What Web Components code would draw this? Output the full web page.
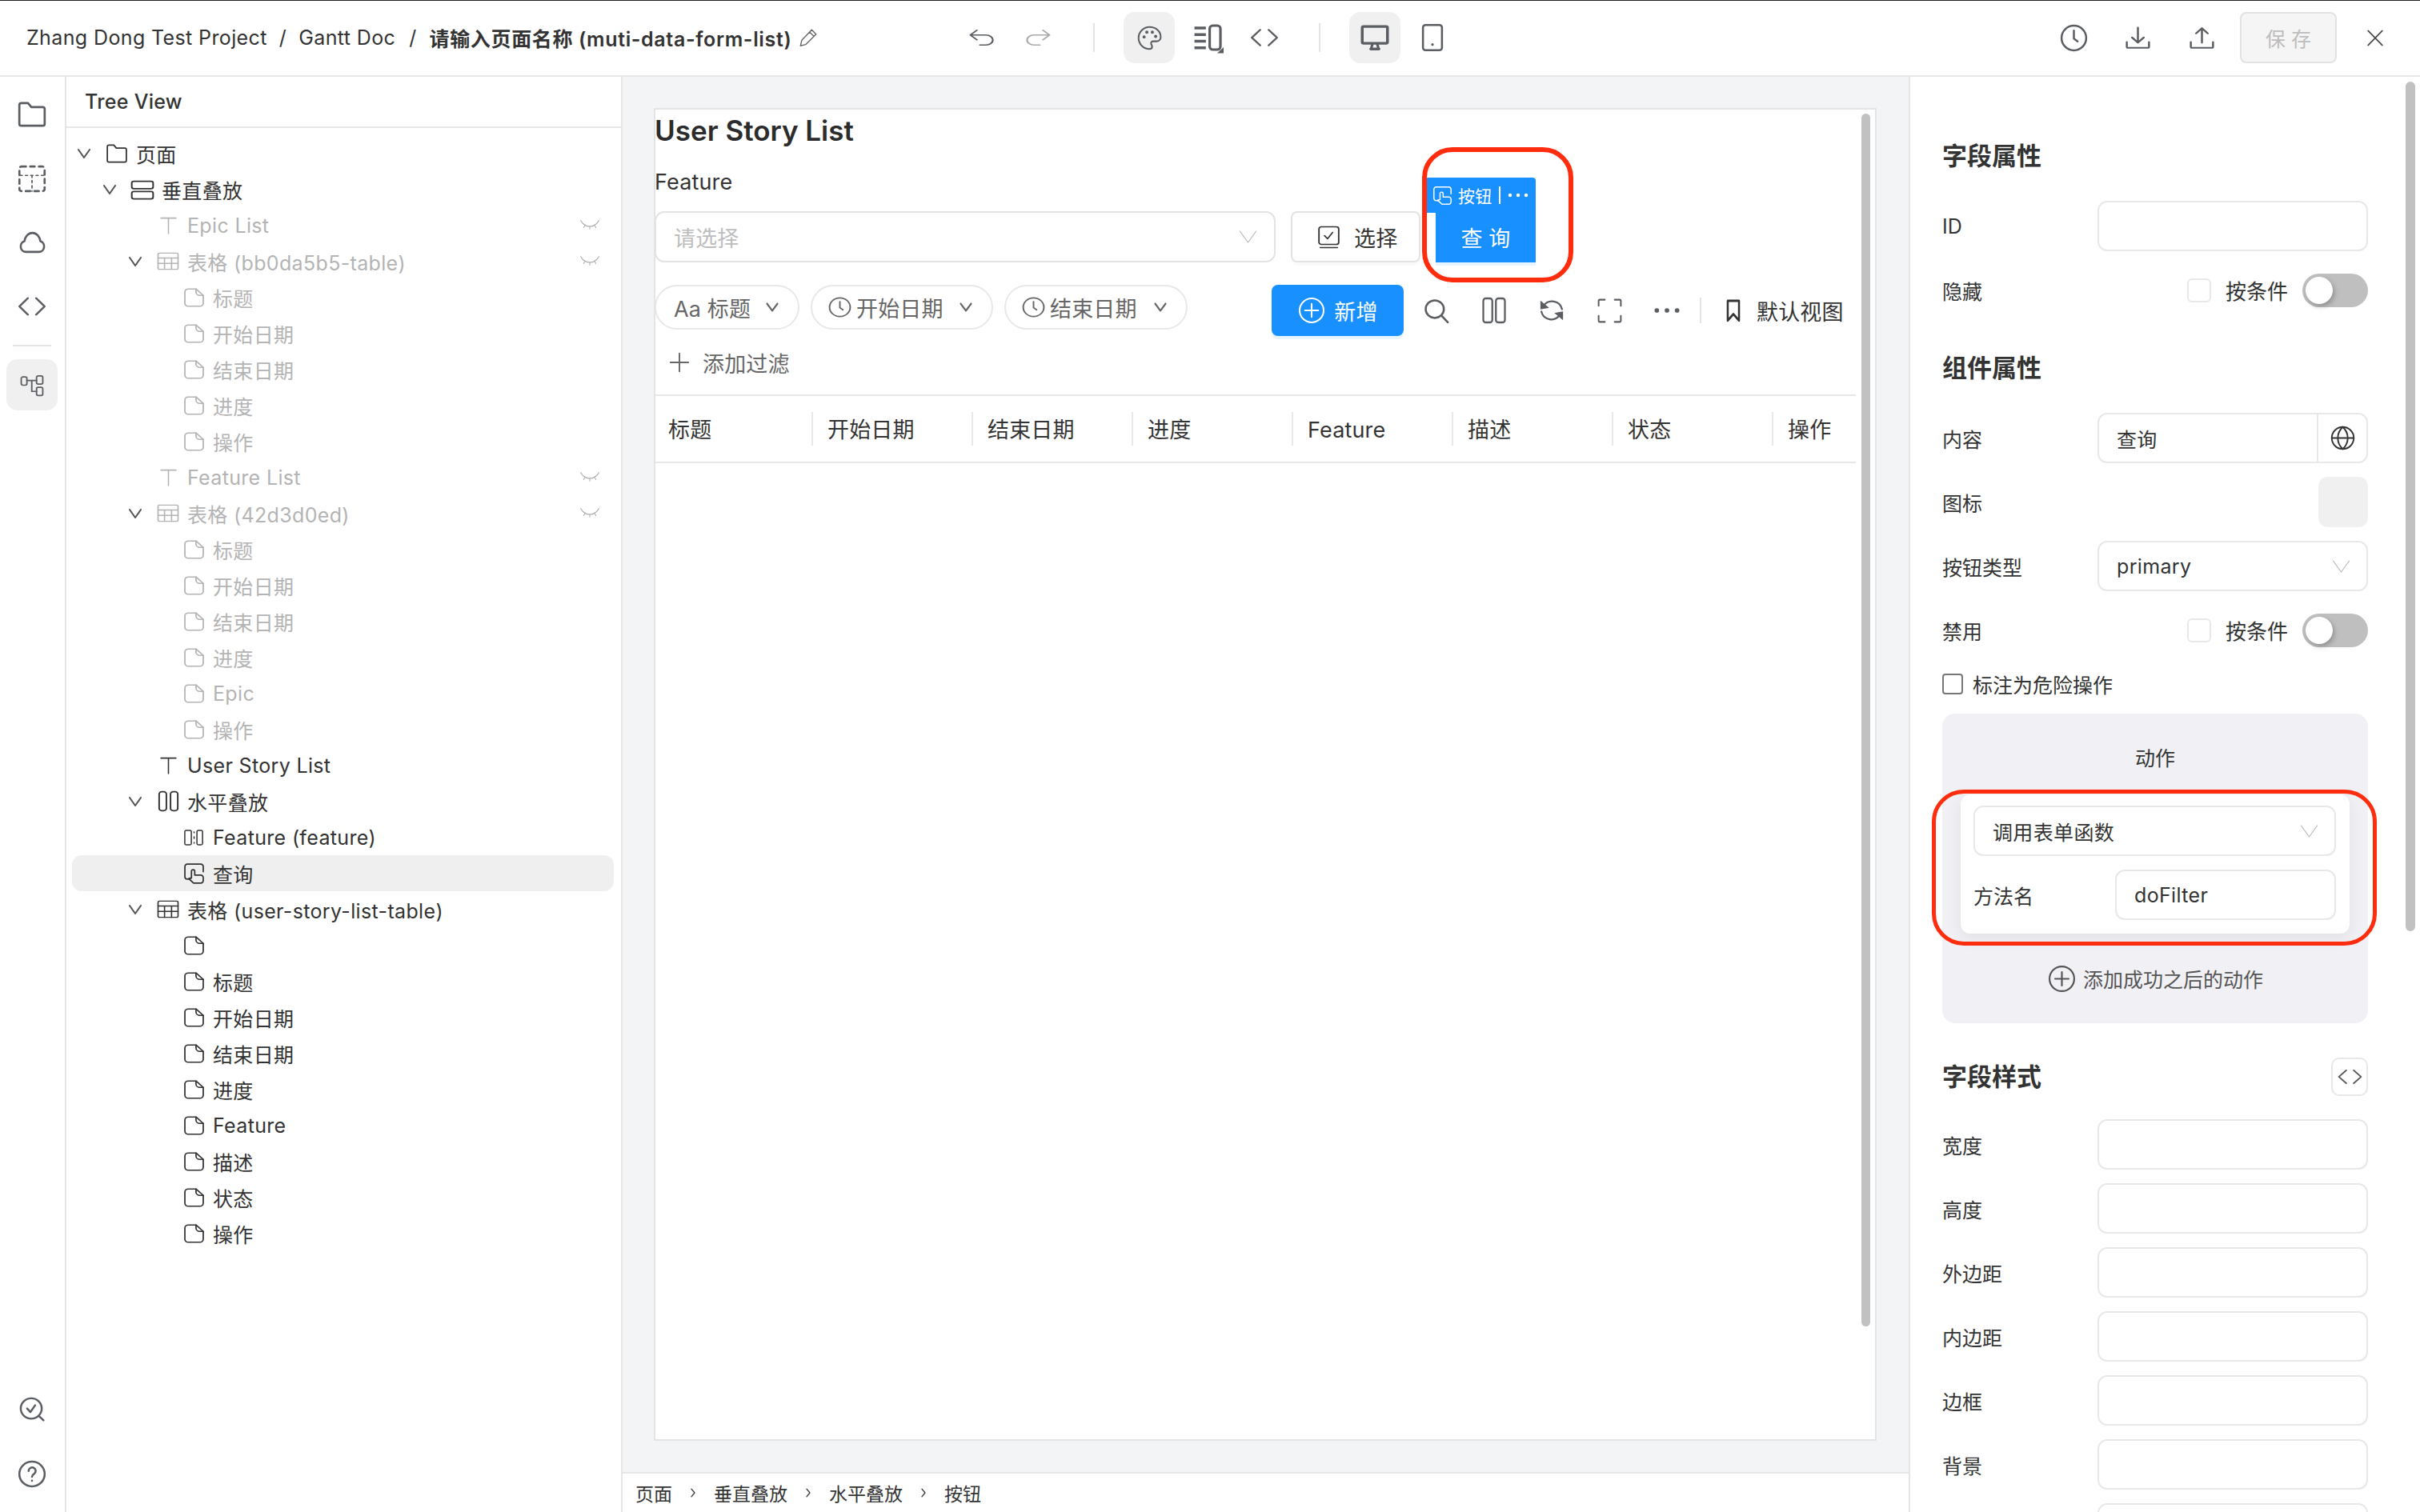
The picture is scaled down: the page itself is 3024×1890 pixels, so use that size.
<!DOCTYPE html>
<html lang="zh"><head><meta charset="utf-8"><title>Form editor</title>
<style>
html,body{margin:0;padding:0;background:#fff;}
body{width:3024px;height:1890px;overflow:hidden;font-family:Inter,"Noto Sans CJK SC",sans-serif;font-size:25px;color:#333;}
</style></head><body>
<app-shell></app-shell>
<script>
const P={
folder:'<path d="M2.5 5A1.5 1.5 0 0 1 4 3.5h5l2.5 3H20A1.5 1.5 0 0 1 21.500 8v11a1.500 1.500 0 0 1-1.500 1.500H4A1.500 1.500 0 0 1 2.500 19z"/>',
dashed:'<rect x="3" y="3" width="18" height="18" rx="1.500" stroke-dasharray="3.200 3"/><path d="M3.500 9.500h17M12 9.500V21" stroke-dasharray="1.500 2.300" stroke-width="1"/>',
cloud:'<path d="M6.800 19.500a4.300 4.300 0 0 1-1.300-8.400C6 7.400 8.700 4.500 12 4.500s6 2.900 6.500 6.600a4.300 4.300 0 0 1-1.300 8.400z"/>',
code:'<path d="M9 5.500 3 12l6 6.500M15 5.500l6 6.500-6 6.500"/>',
tree:'<rect x="2.500" y="4" width="5" height="8" rx="1.500"/><rect x="16" y="3" width="5.500" height="8" rx="1.500"/><rect x="16" y="14" width="5.500" height="8" rx="1.500"/><path d="M7.500 7.500H16M11.800 7.500V18H16"/>',
checksearch:'<circle cx="11" cy="11" r="9"/><path d="M7.500 11l2.800 3.200 4-6"/><path d="M17.500 17.500l4 4"/>',
help:'<circle cx="12" cy="12" r="10"/><path d="M9.300 9.500a2.800 2.800 0 1 1 4.300 2.400c-1 .6-1.600 1.200-1.600 2.300"/><path d="M12 17.300v.2"/>',
undo:'<path d="M8.500 3.500 3 9l5.500 5.500M3 9h13a4.800 4.800 0 0 1 0 11.500h-5"/>',
redo:'<path d="M15.500 3.500 21 9l-5.500 5.500M21 9H8a4.800 4.800 0 0 0 0 11.500h5"/>',
palette:'<path d="M12 2C6.500 2 2 6.500 2 12s4.500 10 10 10c1.500 0 2.300-1 2.300-2.200 0-1.300-1-1.800-1-3 0-1.100.9-1.800 2-1.800h2.800c2.400 0 4-1.700 4-4C22.100 5.700 17.500 2 12 2z"/><circle cx="7" cy="11" r=".7"/><circle cx="9.500" cy="6.800" r=".7"/><circle cx="14.500" cy="6.800" r=".7"/><circle cx="17.500" cy="10.500" r=".7"/>',
outline:'<path d="M1 4h9M1 9.500h9M1 15h9M1 20.500h9" stroke-width="2.400" stroke-linecap="butt"/><rect x="13" y="2" width="8.500" height="20" rx="2.500" stroke-width="2"/><path d="M24 20v5h-5z" fill="currentColor" stroke="none"/>',
monitor:'<rect x="3" y="3.200" width="18" height="13.300" rx="1" stroke-width="2"/><path d="M10.300 17l-1 4h5.400l-1-4" stroke-width="1.800"/><path d="M9 21h6" stroke-width="1.800"/>',
phone:'<rect x="4.500" y="1.500" width="15" height="21" rx="2" stroke-width="1.600"/><path d="M12 17.600v.2" stroke-width="2"/>',
clock:'<circle cx="12" cy="12" r="10"/><path d="M12 6v6.500l3 2.300"/>',
download:'<path d="M12 2v14M7 11.500 12 16.500l5-5M2.500 16v4.500a1 1 0 0 0 1 1h17a1 1 0 0 0 1-1V16"/>',
upload:'<path d="M12 16.500V2.500M7 7.500l5-5 5 5M2.500 16v4.500a1 1 0 0 0 1 1h17a1 1 0 0 0 1-1V16"/>',
close:'<path d="M5 4l14 16M19 4 5 20"/>',
pencil:'<path d="M16 3l5 5L9 20l-6 1.500L4.500 15zM13.500 5.500l5 5"/>',
search:'<circle cx="10.500" cy="10.500" r="8"/><path d="M16.500 16.500 22 22.500"/>',
columns:'<rect x="3" y="2.500" width="7.500" height="19" rx="2"/><rect x="13.500" y="2.500" width="7.500" height="19" rx="2"/>',
refresh:'<path d="M5.200 8.200A8.600 8.600 0 0 1 20.600 11"/><path d="M18.800 15.800A8.600 8.600 0 0 1 3.400 13"/><path d="M2.600 3.800v7.400l7.200-1.400z" fill="currentColor" stroke="none"/><path d="M21.400 20.200v-7.400l-7.200 1.400z" fill="currentColor" stroke="none"/>',
fullscreen:'<path d="M8 3H4a1 1 0 0 0-1 1v4M16 3h4a1 1 0 0 1 1 1v4M8 21H4a1 1 0 0 1-1-1v-4M16 21h4a1 1 0 0 0 1-1v-4"/>',
more:'<circle cx="4" cy="12" r="1.800" fill="currentColor" stroke="none"/><circle cx="12" cy="12" r="1.800" fill="currentColor" stroke="none"/><circle cx="20" cy="12" r="1.800" fill="currentColor" stroke="none"/>',
bookmark:'<path d="M5.500 3h13v18.500L12 15.500l-6.500 6z"/>',
plus:'<path d="M12 3v18M3 12h18"/>',
pluscircle:'<circle cx="12" cy="12" r="10"/><path d="M12 6.500v11M6.500 12h11"/>',
globe:'<circle cx="12" cy="12" r="10"/><path d="M2 12h20M12 2c-6 5.500-6 14.500 0 20M12 2c6 5.500 6 14.500 0 20"/>',
chev:'<path d="M5.500 8.500 12 15.500l6.500-7"/>',
vee:'<path d="M3 6l9 12 9-12"/>',
arrow:'<path d="M8 4l8 8-8 8"/>',
t:'<path d="M3 3.500h18M12 3.500V22"/>',
vstack:'<rect x="2" y="3" width="20" height="8" rx="2"/><rect x="2" y="14" width="20" height="8" rx="2"/>',
hstack:'<rect x="3" y="1.500" width="7" height="21" rx="2.500"/><rect x="14" y="1.500" width="7" height="21" rx="2.500"/>',
table:'<rect x="2" y="3" width="20" height="18" rx="1.500"/><path d="M2 8.500h20M2 14.500h20M8.500 8.500V21M15.500 8.500V21"/>',
field:'<rect x="2.500" y="3" width="7" height="18" rx="1.500"/><rect x="15.500" y="3" width="6" height="18" rx="1.500"/><path d="M12.500 5v1M12.500 11v2M12.500 18v1"/>',
hand:'<path d="M7.500 17.500H5A2.500 2.500 0 0 1 2.500 15V5A2.500 2.500 0 0 1 5 2.500h14A2.500 2.500 0 0 1 21.500 5v5"/><path d="M11.500 21.500 6.500 17l2.800-.6V9.800a1.700 1.700 0 0 1 3.400 0v3.700h6.300a2.500 2.500 0 0 1 2.500 2.500v3a2.500 2.500 0 0 1-2.500 2.500z"/>',
file:'<path d="M14 2H6A3.500 3.500 0 0 0 2.500 5.500v13A3.500 3.500 0 0 0 6 22h12a3.500 3.500 0 0 0 3.500-3.500V9.500z"/><path d="M14 2v3.500a4 4 0 0 0 4 4h3.500"/>',
eye:'<path d="M2 8c5 7 15 7 20 0M12 12.800V16M6.500 11.500 5 14.500M17.500 11.500l1.500 3M2 8l-.5-1M22 8l.5-1"/>',
checkbtn:'<rect x="4" y="2" width="16" height="17" rx="2"/><path d="M8.500 10.500l2.500 3 4-6M5 22h14"/>'
};
class UI extends HTMLElement{
  constructor(){super();this.attachShadow({mode:'open'});}
  a(n,d=''){const v=this.getAttribute(n);return v===null?d:v;}
  connectedCallback(){this.shadowRoot.innerHTML=this.render();}
}
class UiIcon extends UI{render(){
  const w=this.a('w','24'),h=this.a('h',w),sw=this.a('sw','2');
  return `<style>:host{display:inline-flex;flex:none;width:${w}px;height:${h}px;line-height:0}svg{display:block;overflow:visible}</style>
  <svg width="${w}" height="${h}" viewBox="0 0 24 24" preserveAspectRatio="none" fill="none" stroke="currentColor" stroke-width="${sw}" stroke-linecap="round" stroke-linejoin="round">${P[this.a('n')]}</svg>`;
}}
class ToolBtn extends UI{render(){
  const act=this.hasAttribute('active');
  return `<style>:host{display:flex;flex:none;width:64px;height:64px;align-items:center;justify-content:center;border-radius:14px;color:${this.a('c','#5a5d62')};background:${act?'#f0f0f0':'transparent'};margin-left:${this.a('ml','0')}px}</style><slot></slot>`;
}}
class VDiv extends UI{render(){
  return `<style>:host{display:block;flex:none;width:2px;height:${this.a('h','36')}px;background:#e4e4e4;margin:0 ${this.a('mr','36')}px 0 ${this.a('ml','36')}px}</style>`;
}}
class TopBar extends UI{render(){
  return `<style>:host{display:flex;align-items:center;height:94px;border-bottom:2px solid #e6e6e6;box-shadow:inset 0 1px 0 #222;padding-right:24px;background:#fff}
  .crumb{flex:0 0 1161px;padding-left:33px;display:flex;align-items:center;font-size:25px;white-space:nowrap;color:#333;letter-spacing:.38px}
  .s{margin:0 15px;color:#333}.s2{margin-left:17px;margin-right:16px}b{font-weight:600;letter-spacing:.65px}.pen{margin-left:8px;color:#666}
  .save{flex:none;box-sizing:border-box;width:121px;height:64px;margin-left:16px;margin-right:16px;border:2px solid #e2e2e2;border-radius:8px;background:#f5f5f5;color:#bdbdbd;display:flex;align-items:center;justify-content:center;font-size:25px;white-space:pre}
  .sp{flex:1}</style>
  <div class="crumb"><span>Zhang Dong Test Project</span><span class="s">/</span><span>Gantt Doc</span><span class="s s2">/</span><b>请输入页面名称 (muti-data-form-list)</b><ui-icon class="pen" n="pencil" w="26" sw="1.300"></ui-icon></div>
  <tool-btn><ui-icon n="undo" w="36" h="26" sw="1.500"></ui-icon></tool-btn>
  <tool-btn ml="8" c="#aaa"><ui-icon n="redo" w="36" h="26" sw="1.500"></ui-icon></tool-btn>
  <v-div></v-div>
  <tool-btn active><ui-icon n="palette" w="33" h="33" sw="1.500"></ui-icon></tool-btn>
  <tool-btn ml="10"><ui-icon n="outline" w="38" h="36" sw="1.800"></ui-icon></tool-btn>
  <tool-btn ml="6"><ui-icon n="code" w="42" h="36" sw="1.400"></ui-icon></tool-btn>
  <v-div></v-div>
  <tool-btn active><ui-icon n="monitor" w="42" h="38" sw="2"></ui-icon></tool-btn>
  <tool-btn ml="8"><ui-icon n="phone" w="38" h="36"></ui-icon></tool-btn>
  <span class="sp"></span>
  <tool-btn><ui-icon n="clock" w="37" sw="1.600"></ui-icon></tool-btn>
  <tool-btn ml="16"><ui-icon n="download" w="35" h="31" sw="1.700"></ui-icon></tool-btn>
  <tool-btn ml="16"><ui-icon n="upload" w="35" h="31" sw="1.700"></ui-icon></tool-btn>
  <div class="save">保 存</div>
  <tool-btn c="#444"><ui-icon n="close" w="30" h="27" sw="1.500"></ui-icon></tool-btn>`;
}}
class IconRail extends UI{render(){
  return `<style>:host{display:flex;flex-direction:column;box-sizing:border-box;height:100%;border-right:2px solid #e6e6e6;padding:15px 9px 16px 8px;gap:16px;background:#fff;color:#555}
  hr{border:0;height:2px;background:#e4e4e4;margin:0 0 0 8px;width:48px;flex:none}.sp{flex:1}</style>
  <tool-btn><ui-icon n="folder" w="40" h="40" sw="1.600"></ui-icon></tool-btn>
  <tool-btn><ui-icon n="dashed" w="42" h="41" sw="1.500"></ui-icon></tool-btn>
  <tool-btn><ui-icon n="cloud" w="37" h="38" sw="1.700"></ui-icon></tool-btn>
  <tool-btn><ui-icon n="code" w="42" h="38" sw="1.500"></ui-icon></tool-btn>
  <hr>
  <tool-btn active><ui-icon n="tree" w="34" h="31" sw="1.300"></ui-icon></tool-btn>
  <span class="sp"></span>
  <tool-btn><ui-icon n="checksearch" w="35" h="34" sw="1.700"></ui-icon></tool-btn>
  <tool-btn><ui-icon n="help" w="38" h="37" sw="1.600"></ui-icon></tool-btn>`;
}}
class TreeRow extends UI{render(){
  const l=+this.a('l','0'),dim=this.hasAttribute('dim'),sel=this.hasAttribute('sel');
  const ic=this.a('i');const size={t:[25,25,1.500],file:[29,26,1.450],folder:[30,30,1.400],vstack:[32,28,1.500],hstack:[31,27,1.500],table:[30,27,1.300],field:[28,24,1.300],hand:[29,30,1.450]}[ic]||[26,26,1.500];
  return `<style>:host{display:flex;align-items:center;box-sizing:border-box;height:45px;margin:0 9px 0 7px;padding:0 17px 0 ${7+l*32}px;border-radius:12px;white-space:nowrap;font-size:25px;letter-spacing:.34px;color:${dim?'#b4b4b4':'#333'};background:${sel?'#efefef':'transparent'}}
  .c{flex:none;width:16px;margin-right:20px;display:flex;justify-content:center;color:#555}.i{flex:none;width:26px;margin-right:11px;display:flex;justify-content:center}.sp{flex:1}.e{color:#aaa}</style>
  <span class="c">${this.hasAttribute('c')?'<ui-icon n="chev" w="26" h="34" sw="1.700"></ui-icon>':''}</span>
  <span class="i"><ui-icon n="${ic}" w="${size[0]}" h="${size[1]}" sw="${size[2]}"></ui-icon></span><slot></slot><span class="sp"></span>
  ${this.hasAttribute('eye')?'<ui-icon class="e" n="eye" w="26" h="29" sw=".9"></ui-icon>':''}`;
}}
class TreePanel extends UI{render(){
  const f=(l,t,o='')=>`<tree-row l="3" i="file" ${o}>${t}</tree-row>`;
  const cols=['标题','开始日期','结束日期','进度'];
  return `<style>:host{display:flex;flex-direction:column;height:100%;box-sizing:border-box;border-right:2px solid #e6e6e6;background:#fff;overflow:hidden}
  .h{flex:none;height:62px;border-bottom:2px solid #e6e6e6;padding-left:23px;display:flex;align-items:center;font-size:25px;font-weight:500;color:#333;letter-spacing:.3px}.l{padding-top:9px}</style>
  <div class="h">Tree View</div><div class="l">
  <tree-row l="0" i="folder" c>页面</tree-row>
  <tree-row l="1" i="vstack" c>垂直叠放</tree-row>
  <tree-row l="2" i="t" dim eye>Epic List</tree-row>
  <tree-row l="2" i="table" c dim eye>表格 (bb0da5b5-table)</tree-row>
  ${[...cols,'操作'].map(t=>f(3,t,'dim')).join('')}
  <tree-row l="2" i="t" dim eye>Feature List</tree-row>
  <tree-row l="2" i="table" c dim eye>表格 (42d3d0ed)</tree-row>
  ${[...cols,'Epic','操作'].map(t=>f(3,t,'dim')).join('')}
  <tree-row l="2" i="t">User Story List</tree-row>
  <tree-row l="2" i="hstack" c>水平叠放</tree-row>
  <tree-row l="3" i="field">Feature (feature)</tree-row>
  <tree-row l="3" i="hand" sel>查询</tree-row>
  <tree-row l="2" i="table" c>表格 (user-story-list-table)</tree-row>
  ${['',...cols,'Feature','描述','状态','操作'].map(t=>f(3,t)).join('')}
  </div>`;
}}
class FilterPill extends UI{render(){
  return `<style>:host{display:flex;align-items:center;flex:none;box-sizing:border-box;width:${this.a('w')}px;height:56px;border:2px solid #e8e8e8;border-radius:28px;padding:0 20px 0 ${this.a('pl','19')}px;color:#666;font-size:27px;white-space:nowrap}
  .sp{flex:1}</style><slot></slot><span class="sp"></span><ui-icon n="chev" w="24" h="30" sw="2"></ui-icon>`;
}}
class RedBox extends UI{render(){
  return `<style>:host{position:absolute;box-sizing:border-box;left:${this.a('x')}px;top:${this.a('y')}px;width:${this.a('w')}px;height:${this.a('h')}px;border:${this.a('b','6')}px solid #ff2d0d;border-radius:${this.a('r','38')}px;pointer-events:none;z-index:5}</style>`;
}}
class CanvasCard extends UI{render(){
  const heads=['标题','开始日期','结束日期','进度','Feature','描述','状态','操作'];
  return `<style>:host{display:flex;flex-direction:column;position:relative;box-sizing:border-box;height:100%;background:#fff;border:2px solid #e3e4e6;overflow:hidden;font-size:27px;color:#333;letter-spacing:.15px}
  .title{height:44px;line-height:44px;margin-top:4px;margin-left:-1px;font-size:35px;font-weight:600;color:#2c2c2c;white-space:nowrap;letter-spacing:0}
  .lab{height:40px;line-height:40px;margin-top:23px;margin-left:-1px}
  .row{display:flex;margin-top:16px;height:64px;margin-left:-1px}
  .sel{box-sizing:border-box;width:776px;height:64px;border:2px solid #e3e3e3;border-radius:12px;padding:0 19px 0 22px;display:flex;align-items:center;justify-content:space-between;color:#bdbdbd}
  .btn{box-sizing:border-box;width:162px;height:64px;margin-left:19px;border:2px solid #e3e3e3;border-radius:8px;display:flex;align-items:center;padding-left:27px;gap:13px;box-shadow:0 4px 0 rgba(0,0,0,.02)}
  .q{width:125px;height:64px;margin-left:19px;background:#1890ff;color:#fff;display:flex;align-items:center;justify-content:center;white-space:pre;box-shadow:0 4px 0 rgba(5,145,255,.1)}
  .tag{position:absolute;left:962px;top:85px;width:138px;height:44px;background:#1890ff;color:#fff;border-radius:4px 4px 0 0;display:flex;align-items:center;font-size:21px;padding-left:8px;box-sizing:border-box;z-index:2}
  .tag i{width:2px;height:22px;background:#fff;margin:0 7px 0 9px}.tag span{margin-left:6px}
  .f{display:flex;margin-top:28px;height:64px;gap:14px;align-items:flex-start;margin-left:-1px}
  .add{flex:none;box-sizing:border-box;width:165px;height:64px;margin-left:91px;background:#1890ff;color:#fff;border-radius:8px;display:flex;align-items:center;justify-content:center;gap:10px;box-shadow:0 4px 0 rgba(5,145,255,.1)}
  .tools{display:flex;align-items:center;height:64px;margin-left:-9px}
  .tools tool-btn{width:72px}
  .bm{display:flex;align-items:center;gap:16px;color:#333;margin-left:27px}
  .af{display:flex;align-items:center;height:40px;margin-top:13px;padding-left:15px;gap:14px;color:#666}
  .tb{display:grid;grid-template-columns:195px repeat(7,200px);margin-top:20px;height:82px;margin-right:24px;border-top:2px solid #e8e8e8;border-bottom:2px solid #e8e8e8;overflow:hidden;align-items:center}
  .tb div{height:42px;line-height:45px;padding-left:18px;border-left:2px solid #e8e8e8;white-space:nowrap;box-sizing:border-box}
  .tb div:first-child{border-left:0;padding-left:16px}
  .sb{position:absolute;left:1507px;top:5px;width:11px;height:1516px;background:#c1c1c1;border-radius:6px}</style>
  <div class="title">User Story List</div>
  <div class="lab">Feature</div>
  <div class="row"><div class="sel"><span>请选择</span><ui-icon n="vee" w="27" h="28" sw="1" style="color:#b5b5b5"></ui-icon></div>
    <div class="btn"><ui-icon n="checkbtn" w="37" h="31" sw="1.200"></ui-icon><span>选择</span></div>
    <div class="q">查 询</div></div>
  <div class="tag"><ui-icon n="hand" w="27" h="27" sw="1.300"></ui-icon><span>按钮</span><i></i><ui-icon n="more" w="30" h="30"></ui-icon></div>
  <red-box x="958" y="47" w="189" h="169"></red-box>
  <div class="f">
    <filter-pill w="181" pl="22">Aa&nbsp;标题</filter-pill>
    <filter-pill w="228"><ui-icon n="clock" w="31" h="28" sw="1.500" style="margin-right:5px"></ui-icon>开始日期</filter-pill>
    <filter-pill w="229"><ui-icon n="clock" w="31" h="28" sw="1.500" style="margin-right:5px"></ui-icon>结束日期</filter-pill>
    <div class="add"><ui-icon n="pluscircle" w="36" sw="1.400"></ui-icon><span>新增</span></div>
    <div class="tools">
      <tool-btn><ui-icon n="search" w="34" h="33" sw="1.800"></ui-icon></tool-btn>
      <tool-btn><ui-icon n="columns" w="36" h="38" sw="1.500"></ui-icon></tool-btn>
      <tool-btn><ui-icon n="refresh" w="36" h="36" sw="1.500"></ui-icon></tool-btn>
      <tool-btn><ui-icon n="fullscreen" w="37" h="37" sw="1.300"></ui-icon></tool-btn>
      <tool-btn><ui-icon n="more" w="38" h="38"></ui-icon></tool-btn>
      <v-div ml="5" mr="0" h="32"></v-div>
      <div class="bm"><ui-icon n="bookmark" w="26" h="32" sw="2.300"></ui-icon><span>默认视图</span></div>
    </div>
  </div>
  <div class="af"><ui-icon n="plus" w="30" sw="1.500"></ui-icon><span>添加过滤</span></div>
  <div class="tb">${heads.map(h=>`<div>${h}</div>`).join('')}</div>
  <div class="sb"></div>`;
}}
class CrumbBar extends UI{render(){
  const items=['页面','垂直叠放','水平叠放','按钮'];
  return `<style>:host{display:flex;flex:none;align-items:center;box-sizing:border-box;height:50px;border-top:2px solid #e6e6e6;padding-left:16px;padding-right:16px;background:#fff;font-size:23px;gap:20px;white-space:nowrap;color:#333}ui-icon{color:#333}</style>
  ${items.map(t=>`<span>${t}</span>`).join('<ui-icon n="arrow" w="12" h="14" sw="2.400"></ui-icon>')}`;
}}
class CanvasPanel extends UI{render(){
  return `<style>:host{display:flex;flex-direction:column;height:100%;min-width:0;background:#f3f4f6}.m{flex:1;min-height:0;padding:39px 40px 39px 39px}</style>
  <div class="m"><canvas-card></canvas-card></div><crumb-bar></crumb-bar>`;
}}
class UiInput extends UI{render(){
  const v=this.a('v'),vee=this.hasAttribute('vee'),gl=this.hasAttribute('globe');
  return `<style>:host{display:flex;align-items:center;box-sizing:border-box;height:${this.a('h','63')}px;border:2px solid #e8e8e8;border-radius:12px;background:#fff;font-size:25px;color:#333;padding-left:22px;overflow:hidden;letter-spacing:.35px}
  span{flex:1;white-space:nowrap}.g{flex:none;width:60px;height:100%;border-left:2px solid #e8e8e8;display:flex;align-items:center;justify-content:center}</style>
  <span>${v}</span>${vee?'<ui-icon n="vee" w="27" h="28" sw="1" style="color:#b5b5b5;margin-right:18px"></ui-icon>':''}${gl?'<div class="g"><ui-icon n="globe" w="33" sw="1.400"></ui-icon></div>':''}`;
}}
class PropRow extends UI{render(){
  return `<style>:host{display:grid;grid-template-columns:194px 338px;align-items:center;height:63px;margin-bottom:17px;font-size:25px;color:#333}</style><slot name="l"></slot><slot></slot>`;
}}
class UiToggle extends UI{render(){
  return `<style>:host{display:block;position:relative;flex:none;width:82px;height:42px;border-radius:21px;background:#bfbfbf}
  i{position:absolute;left:4px;top:4px;width:34px;height:34px;border-radius:50%;background:#fff;box-shadow:2px 3px 6px rgba(0,0,0,.25)}</style><i></i>`;
}}
class CondCtl extends UI{render(){
  return `<style>:host{display:flex;align-items:center;justify-content:flex-end;font-size:26px}
  i{width:30px;height:30px;box-sizing:border-box;border:2px solid #e8e8e8;border-radius:6px;margin-right:18px}ui-toggle{margin-left:18px}</style><i></i><span>按条件</span><ui-toggle></ui-toggle>`;
}}
class ActionPanel extends UI{render(){
  return `<style>:host{display:block;position:relative;box-sizing:border-box;width:532px;height:387px;background:#f0f0f5;border-radius:16px;padding-top:36px;font-size:25px;color:#333}
  .t{height:40px;line-height:40px;text-align:center}
  .c{box-sizing:border-box;margin:25px 23px 0;height:174px;padding:14px 17px 0 16px;background:#fff;border-radius:12px;box-shadow:0 6px 20px rgba(0,0,0,.07)}
  .r{display:grid;grid-template-columns:177px 1fr;align-items:center;margin-top:17px}
  .a{display:flex;align-items:center;justify-content:center;gap:8px;height:40px;margin-top:36px;color:#555}</style>
  <div class="t">动作</div>
  <div class="c"><ui-input v="调用表单函数" vee></ui-input><div class="r"><span>方法名</span><ui-input v="doFilter"></ui-input></div></div>
  <div class="a"><ui-icon n="pluscircle" w="37" sw="1.400"></ui-icon><span>添加成功之后的动作</span></div>
  <red-box x="-13" y="95" w="556" h="195" b="5" r="40"></red-box>`;
}}
class PropPanel extends UI{render(){
  const rows=['宽度','高度','外边距','内边距','边框','背景','字体'];
  const row=(l,c)=>`<prop-row><span slot="l">${l}</span>${c}</prop-row>`;
  return `<style>:host{display:block;position:relative;box-sizing:border-box;height:100%;border-left:2px solid #e6e6e6;padding:79px 65px 0 40px;background:#fff;overflow:hidden}
  h3{margin:0;font-size:31px;font-weight:600;line-height:40px;color:#333}
  .mb{margin-bottom:36px}.ic{width:62px;height:63px;background:#f0f0f0;border-radius:12px;justify-self:end}
  .dg{display:flex;align-items:center;gap:12px;height:26px;margin-top:23px;margin-bottom:24px;font-size:25px;color:#333}
  .dg i{width:26px;height:26px;box-sizing:border-box;border:2px solid #777;border-radius:4px}
  .sh{display:flex;align-items:center;justify-content:space-between;height:48px;margin:43px 0 29px}
  .cb{box-sizing:border-box;width:46px;height:48px;border:2px solid #e8e8e8;border-radius:10px;display:flex;align-items:center;justify-content:center;color:#555}
  .sb{position:absolute;left:619px;top:6px;width:12px;height:1062px;background:#c1c1c1;border-radius:6px}</style>
  <h3 class="mb">字段属性</h3>
  ${row('ID','<ui-input v=""></ui-input>')}
  ${row('隐藏','<cond-ctl></cond-ctl>')}
  <h3 class="mb" style="margin-top:46px">组件属性</h3>
  ${row('内容','<ui-input v="查询" globe></ui-input>')}
  ${row('图标','<div class="ic"></div>')}
  ${row('按钮类型','<ui-input v="primary" vee></ui-input>')}
  ${row('禁用','<cond-ctl></cond-ctl>')}
  <div class="dg"><i></i><span>标注为危险操作</span></div>
  <action-panel></action-panel>
  <div class="sh"><h3>字段样式</h3><div class="cb"><ui-icon n="code" w="37" h="30" sw="1.300"></ui-icon></div></div>
  ${rows.map((l,i)=>row(i<6?l:'','<ui-input v=""></ui-input>')).join('')}
  <div class="sb"></div>`;
}}
class AppShell extends UI{render(){
  return `<style>:host{display:block;width:3024px;height:1890px}
  .m{display:grid;grid-template-columns:83px 695px 1607px 639px;height:1794px}</style>
  <top-bar></top-bar><div class="m"><icon-rail></icon-rail><tree-panel></tree-panel><canvas-panel></canvas-panel><prop-panel></prop-panel></div>`;
}}
const defs={'ui-icon':UiIcon,'tool-btn':ToolBtn,'v-div':VDiv,'top-bar':TopBar,'icon-rail':IconRail,'tree-row':TreeRow,'tree-panel':TreePanel,'filter-pill':FilterPill,'red-box':RedBox,'canvas-card':CanvasCard,'crumb-bar':CrumbBar,'canvas-panel':CanvasPanel,'ui-input':UiInput,'prop-row':PropRow,'ui-toggle':UiToggle,'cond-ctl':CondCtl,'action-panel':ActionPanel,'prop-panel':PropPanel,'app-shell':AppShell};
for(const k in defs)customElements.define(k,defs[k]);
</script>
</body></html>
